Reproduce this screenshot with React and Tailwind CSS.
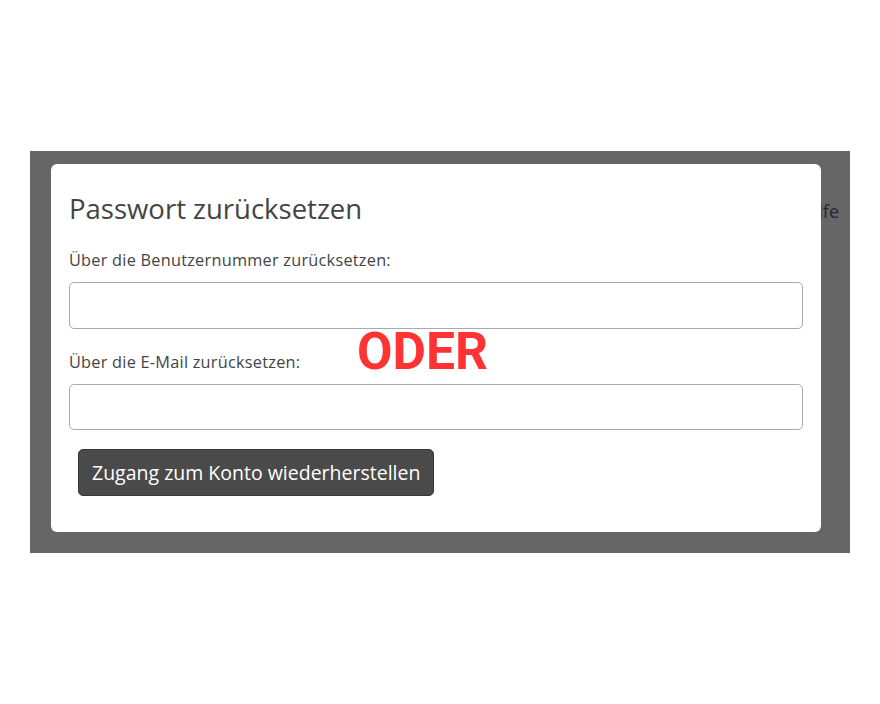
export default function App() {
  return (
    <div className="h-[704px] w-[880px] bg-white pt-[151px] pl-[30px] pr-[30px]" style={{ fontFamily: '"Open Sans", sans-serif' }}>
      <div className="relative overflow-hidden bg-[#666666] pt-[13px] pb-[21px] pl-[21px] pr-[29px]">
        {/* text of the page behind the overlay */}
        <span className="absolute right-[11px] top-[47px] z-0 text-[18px] text-[#1f2a35]">Hilfe</span>

        <div className="relative z-10 rounded-[6px] bg-white pl-[18px] pr-[18px] pt-[27px] pb-[36px]">
          <h2 className="text-[27.5px] leading-[36px] text-[#444]">Passwort zurücksetzen</h2>

          <label className="mt-[22px] block text-[16.3px] leading-[22px] tracking-[0.25px] text-[#444]">Über die Benutzernummer zurücksetzen:</label>
          <input className="mt-[11px] block h-[47px] w-full rounded-[5px] border border-[#aaa] bg-white px-3" />

          <label className="mt-[22px] block text-[16.3px] leading-[22px] tracking-[0.25px] text-[#444]">Über die E-Mail zurücksetzen:</label>
          <input className="mt-[11px] block h-[46px] w-full rounded-[5px] border border-[#aaa] bg-white px-3" />

          <span
            className="absolute left-[306px] top-[162px] text-[51.5px] font-bold leading-none text-[#ff3333]"
            style={{ fontFamily: 'Roboto, sans-serif' }}
          >
            ODER
          </span>

          <button className="ml-[9px] mt-[19px] block h-[47px] rounded-[5px] border border-[#2f3a45] bg-[#4a4a4a] px-[13px] text-[19.5px] text-white">
            Zugang zum Konto wiederherstellen
          </button>
        </div>
      </div>
    </div>
  );
}
